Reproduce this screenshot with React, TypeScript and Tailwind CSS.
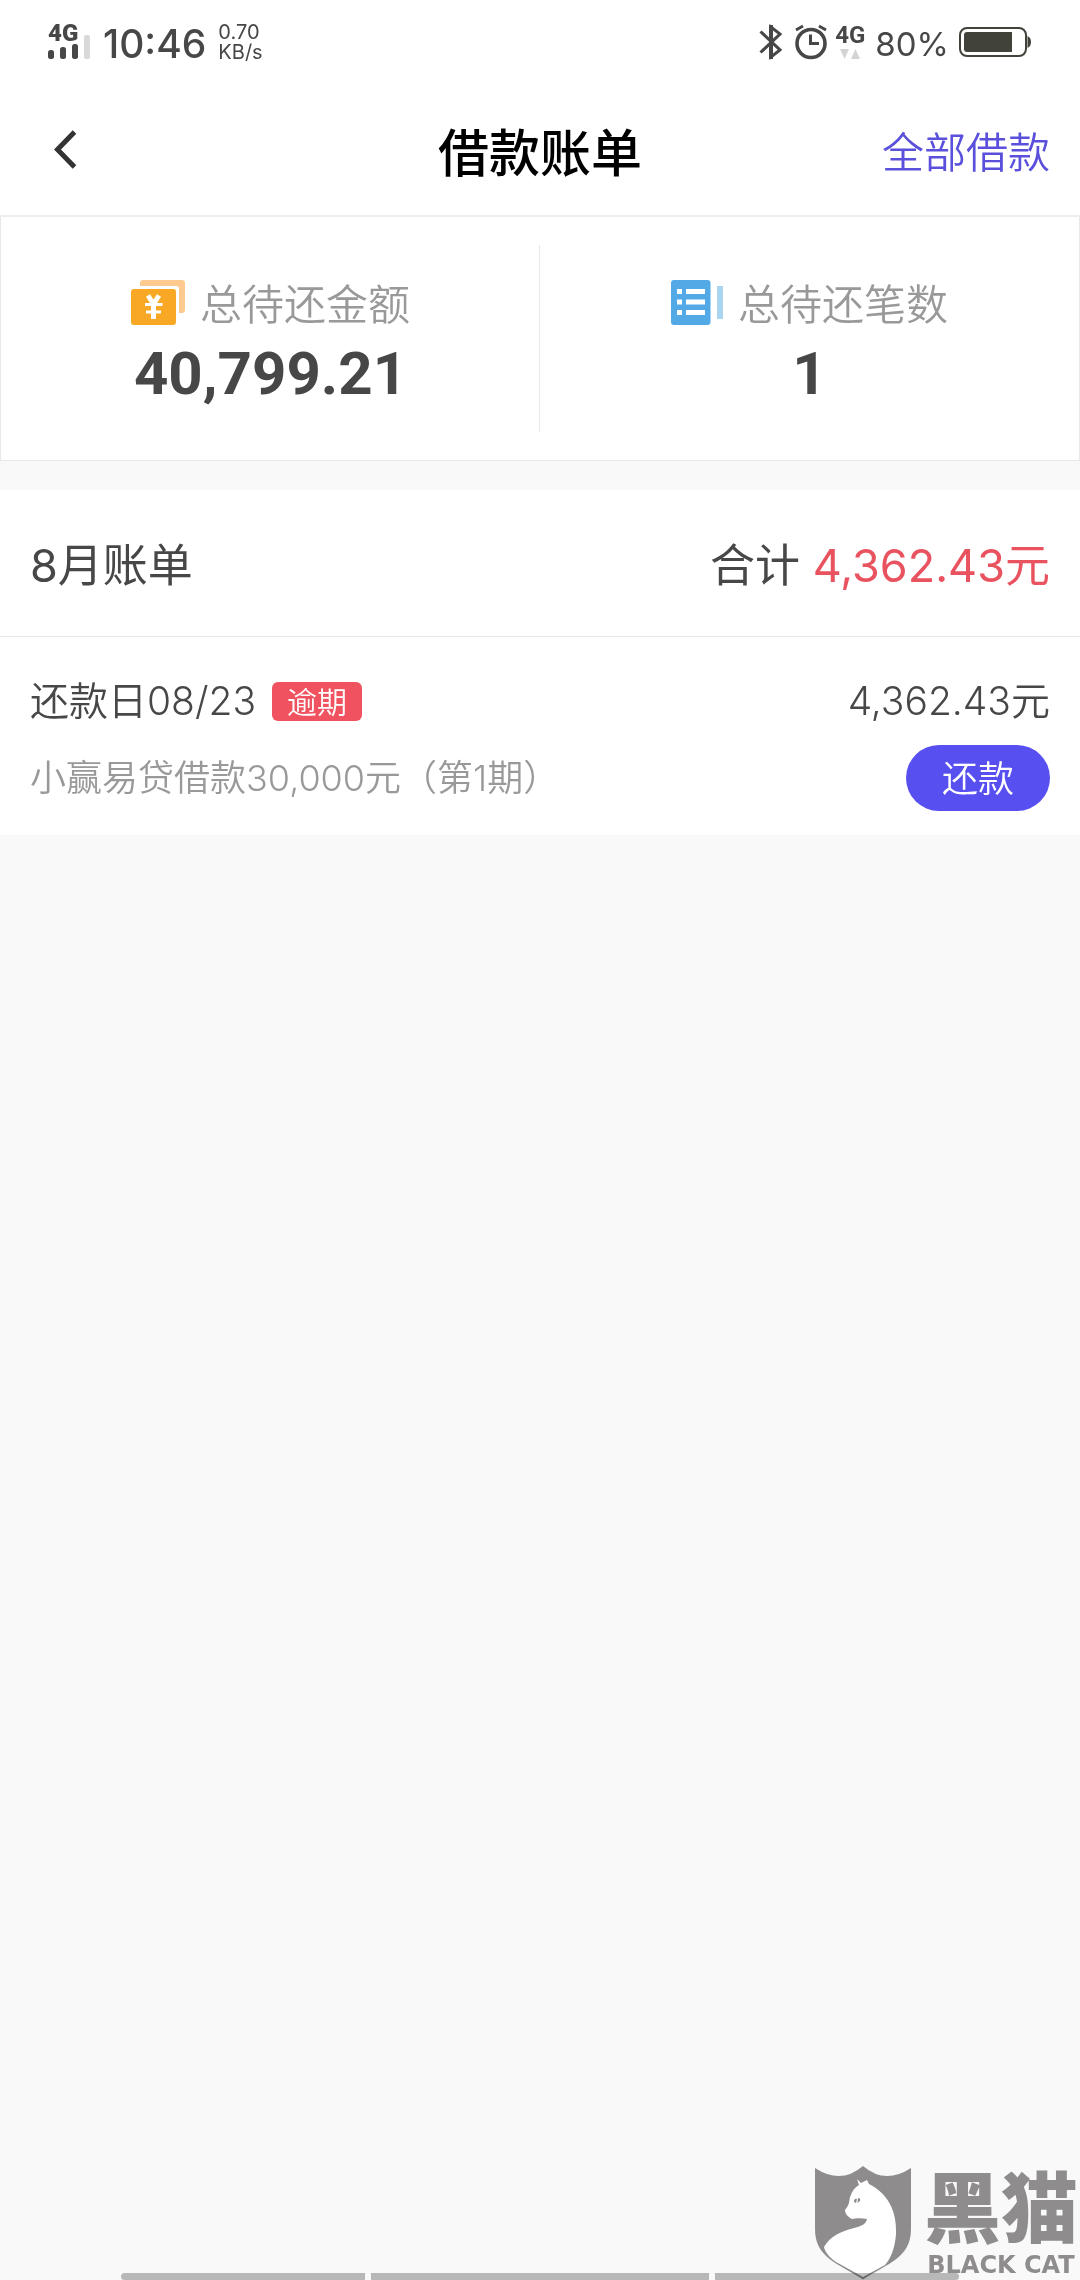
import type { ReactNode } from "react";

const latin = "font-[Inter,'Noto_Sans_CJK_SC',sans-serif]";

const SignalIcon = () => (
  <svg className="w-[43px] h-[26px] block" viewBox="0 0 43 26" aria-hidden="true">
    <g fill="#474747">
      <rect x="0" y="16" width="6" height="9" rx="2.5" />
      <rect x="12" y="13" width="6" height="12" rx="2.5" />
      <rect x="24" y="10" width="6" height="15" rx="2.5" />
    </g>
    <rect x="36" y="1" width="6" height="24" rx="2" fill="#d9d9d9" />
  </svg>
);

const BluetoothIcon = () => (
  <svg className="w-6 h-9" viewBox="0 0 24 36" fill="none" stroke="#474747" strokeWidth="3" aria-hidden="true">
    <path d="M1.5 7.5 L21 26 L12 33 V3 L21 10 L1.5 28.500" />
    <path d="M12 1 V35" strokeWidth="4" />
  </svg>
);

const AlarmIcon = () => (
  <svg className="w-8 h-9" viewBox="0 0 32 36" fill="none" stroke="#474747" aria-hidden="true">
    <circle cx="16" cy="19.500" r="14" strokeWidth="3.6" />
    <path d="M15.500 10.500 V19.500 H24" strokeWidth="3" />
    <path d="M1 6 L8 2 M24 2 L31 6" strokeWidth="3" />
  </svg>
);

const BatteryIcon = () => (
  <svg className="w-[73px] h-[30px]" viewBox="0 0 73 30" aria-hidden="true">
    <rect x="1" y="1" width="66" height="28" rx="7" fill="none" stroke="#41423a" strokeWidth="2" />
    <path d="M8 5 H53 V25 H8 Q5 25 5 22 V8 Q5 5 8 5Z" fill="#41423a" />
    <path d="M68.500 9 Q72 10.500 72 15 Q72 19.500 68.500 21Z" fill="#41423a" />
  </svg>
);

const MoneyIcon = () => (
  <svg className="w-[54px] h-[45px]" viewBox="0 0 54 45" aria-hidden="true">
    <path d="M9 3 Q9 0 12 0 H51 Q54 0 54 3 V30 Q54 33 51 33 H48 V9 Q48 6 45 6 H9Z" fill="#fdcb8f" />
    <rect x="0" y="9" width="45" height="36" rx="3" fill="#f9a825" />
    <path d="M17 15.500 L22.500 24 L28 15.500 M22.500 24 V39" fill="none" stroke="#fff" strokeWidth="5" />
    <path d="M14 24.500 H31.500 M15 32 H30" fill="none" stroke="#fff" strokeWidth="3" />
  </svg>
);

const ListIcon = () => (
  <svg className="w-[52px] h-[45px]" viewBox="0 0 52 45" aria-hidden="true">
    <rect width="39.500" height="45" rx="3" fill="#52a9e6" />
    <rect x="46" y="6" width="6" height="33" fill="#a9d4f2" />
    <g fill="#fff">
      <path d="M6 9h5v5H6zM6 19.500h5v5H6zM6 30h5v5H6z" />
      <path d="M15 9h19v5H15zM15 19.500h19v5H15zM15 30h19v5H15z" />
    </g>
  </svg>
);

const ShieldCat = () => (
  <svg className="w-[98px] h-[114px]" viewBox="0 0 98 114" aria-hidden="true">
    <path
      d="M1 2 Q27 19 49 0 Q71 19 97 2 V63 C97 92 74 97 49 113.500 C24 97 1 92 1 63Z"
      fill="#8e8c8d"
    />
    <path
      d="M43 13 L47 17 L53 14 L55 18 C73 27 83 44 82 68 C81 82 77 92 71 99 L49 111 L22 96 C15 91 11 86 10 81 C16 70 28 65 40 62 C48 60 52 58 53 53 C48 52 42 52 38 53 C34 51 31 48 31 44 C35 39 35 37 36 31 C38 25 41 21 45 19Z"
      fill="#fff"
    />
    <path d="M40 36 Q40 32 43 33 L42 37Z M44 32 Q47 32 46 35 L43.500 37Z" fill="#8e8c8d" />
  </svg>
);

const StatusBar = () => (
  <div className={`${latin} h-[84px] pl-12 pr-12 flex items-center justify-between text-[#474747]`}>
    <div className="flex items-center">
      <div className="relative w-[43px] h-9">
        <span className="absolute left-0 top-0 font-[Roboto,sans-serif] text-[24px] leading-[18px] font-black">4G</span>
        <span className="absolute left-0 bottom-0">
          <SignalIcon />
        </span>
      </div>
      <span className="ml-3 pt-1 text-[39px] leading-[48px] font-medium">10:46</span>
      <div className="ml-3 flex flex-col text-[20px] leading-[20px]">
        <span>0.70</span>
        <span>KB/s</span>
      </div>
    </div>
    <div className="flex items-center">
      <BluetoothIcon />
      <span className="ml-3 flex">
        <AlarmIcon />
      </span>
      <div className="ml-2 flex flex-col items-center font-[Roboto,sans-serif] text-[24px] leading-[20px] font-bold">
        <span>4G</span>
        <svg className="w-5 h-[11px] mt-1" viewBox="0 0 20 11" fill="#d4d4d4" aria-hidden="true">
          <path d="M0 0H9L4.500 10ZM11 10H20L15.500 0Z" />
        </svg>
      </div>
      <span className="mx-[10px] pt-1 text-[33px] leading-[40px]">80%</span>
      <BatteryIcon />
    </div>
  </div>
);

const NavBar = () => (
  <header className="h-[133px] px-[30px] grid grid-cols-3 items-center border-b-2 border-[#eeeeee]">
    <button type="button" aria-label="返回" className="justify-self-start pl-6 pr-6 py-4">
      <svg className="w-6 h-10" viewBox="0 0 24 40" fill="none" stroke="#333" strokeWidth="5" aria-hidden="true">
        <path d="M20.500 2 L3.500 19.500 L20.500 37" />
      </svg>
    </button>
    <h1 className="text-center text-[51px] leading-[60px] font-medium text-black">借款账单</h1>
    <a href="#all" className="justify-self-end text-[42px] leading-[60px] font-[350] text-[#5a50dc]">
      全部借款
    </a>
  </header>
);

const Stat = ({ icon, label, value }: { icon: ReactNode; label: string; value: string }) => (
  <div className="flex-1 flex flex-col items-center">
    <div className="flex items-center gap-[15px] text-[42px] leading-[60px] font-[350] text-[#999999]">
      {icon}
      <span>{label}</span>
    </div>
    <strong className="font-[Roboto,sans-serif] text-[60px] leading-[84px] font-bold text-[#474747]">{value}</strong>
  </div>
);

const App = () => (
  <div className="relative min-h-screen flex flex-col bg-[#f9f9f9] font-['Noto_Sans_CJK_SC',sans-serif] overflow-hidden">
    <div className="bg-white">
      <StatusBar />
      <NavBar />
    </div>

    <main className="flex-1">
      <section className="relative h-[244px] pt-[55px] bg-white border-x border-b border-[#e8e8e8] flex items-start">
        <Stat icon={<MoneyIcon />} label="总待还金额" value="40,799.21" />
        <Stat icon={<ListIcon />} label="总待还笔数" value="1" />
        <span className="absolute left-1/2 top-7 bottom-7 -translate-x-full border-l border-[#e8e8e8]" />
      </section>

      <section className="mt-[29px] bg-white">
        <div className={`${latin} h-[147px] pt-[6px] px-[30px] flex items-center justify-between border-b border-[#e8e8e8] text-[45px] leading-[60px] text-[#474747]`}>
          <h2>8月账单</h2>
          <p>
            合计 <span className="text-[#e9525f]">4,362.43元</span>
          </p>
        </div>

        <div className={`${latin} px-[30px] pt-[34px] pb-6`}>
          <div className="flex items-center justify-between text-[39px] leading-[60px] font-[350] text-[#474747]">
            <div className="flex items-center gap-4">
              <span>还款日08/23</span>
              <span className="rounded-md bg-[#f0525f] px-[15px] h-[39px] text-[30px] leading-[40px] text-white">逾期</span>
            </div>
            <span>4,362.43元</span>
          </div>
          <div className="mt-[14px] flex items-center justify-between">
            <p className="text-[36px] leading-[60px] font-[350] text-[#999999]">小赢易贷借款30,000元（第1期）</p>
            <button type="button" className="w-36 h-[66px] rounded-full bg-[#574ff0] text-[36px] leading-[68px] font-[350] text-white">
              还款
            </button>
          </div>
        </div>
      </section>
    </main>

    <div className="absolute right-0 bottom-0 flex items-end gap-3 pr-[2px] text-[#8e8c8d]">
      <ShieldCat />
      <div className="flex flex-col items-center pb-[2px]">
        <span className="font-['Liberation_Sans','Noto_Sans_CJK_SC',sans-serif] text-[77px] leading-[84px] font-black">黑猫</span>
        <span className="font-['DejaVu_Sans',sans-serif] text-[24px] leading-[26px] font-bold whitespace-nowrap">BLACK CAT</span>
      </div>
    </div>

    <div className="px-[121px] flex gap-[6px] mix-blend-multiply">
      <span className="h-[7px] flex-[244] rounded-l-full bg-[#bdbdbd]" />
      <span className="h-[7px] flex-[338] bg-[#bdbdbd]" />
      <span className="h-[7px] flex-[244] rounded-r-full bg-[#bdbdbd]" />
    </div>
  </div>
);

export default App;
